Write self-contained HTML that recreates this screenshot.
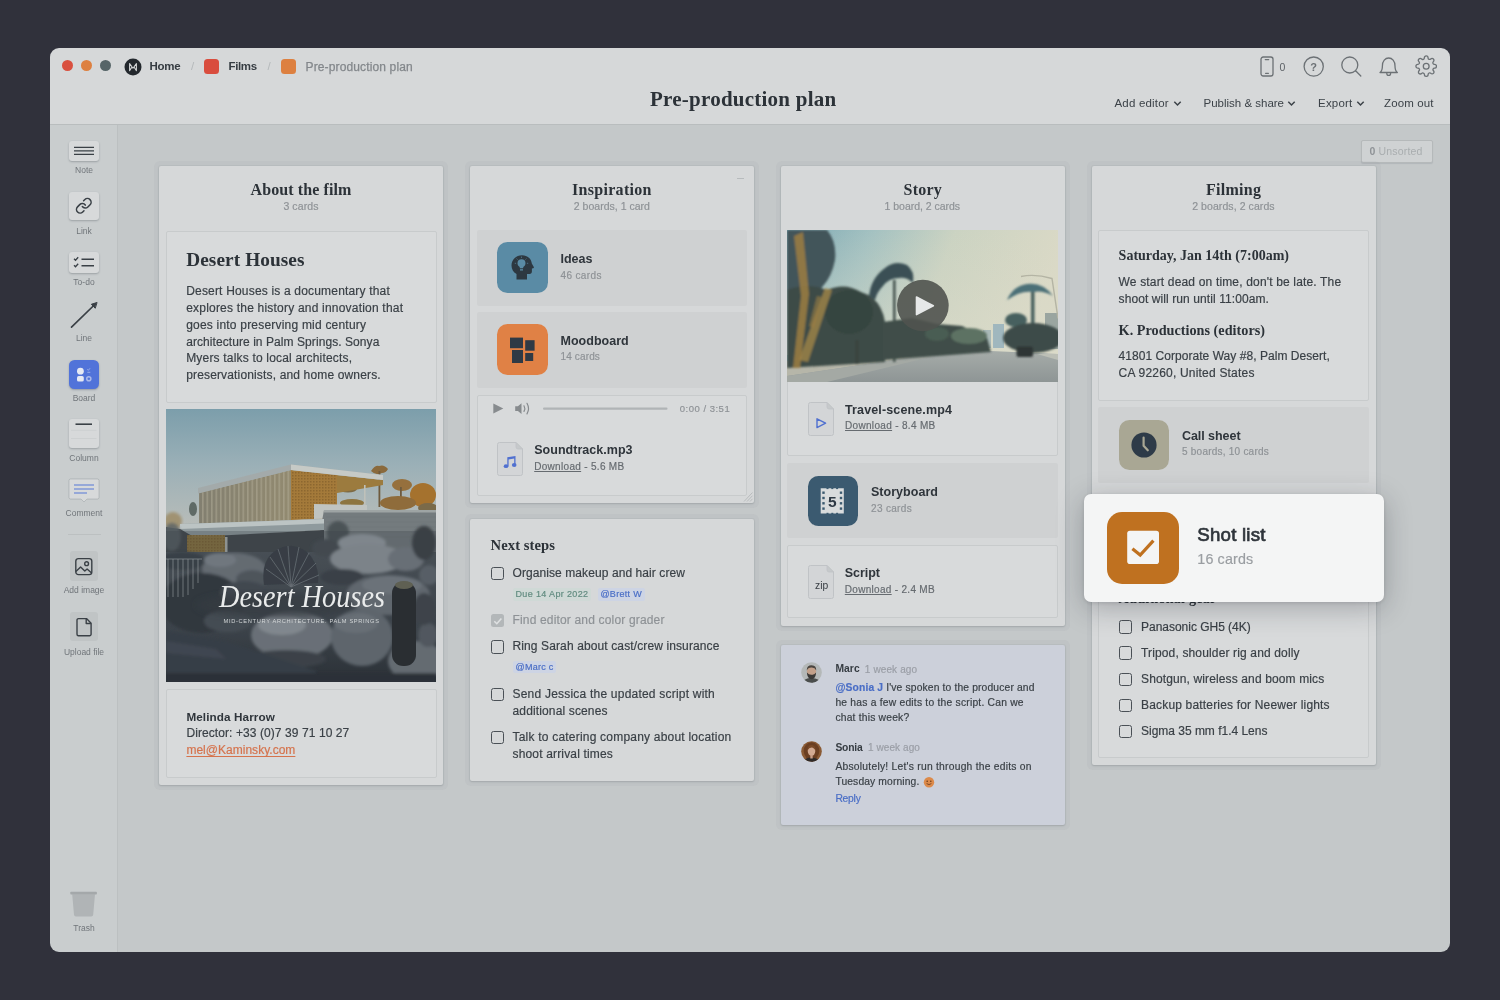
<!DOCTYPE html>
<html><head><meta charset="utf-8"><title>Pre-production plan</title>
<style>
*{box-sizing:border-box;margin:0;padding:0}
html,body{width:1500px;height:1000px;overflow:hidden}
body{background:#30313b;font-family:"Liberation Sans",sans-serif;color:#3a4046;position:relative;font-size:12px}
.a{position:absolute}
.t{position:absolute;white-space:nowrap;line-height:1}
.serif{font-family:"Liberation Serif",serif;font-weight:bold;color:#2c3238}
#win{will-change:transform;position:absolute;left:0;top:0;width:1500px;height:1000px;clip-path:inset(48px 50px 48px 50px round 9px);background:#c4c8c9}
#hdr{left:50px;top:48px;width:1400px;height:77px;background:#d6d8d9;border-bottom:1px solid #b9bdbe}
#side{left:50px;top:125px;width:68px;height:827px;background:#c9cdce;border-right:1px solid #bcc0c1}
.col{position:absolute;background:#d6d8d9;box-shadow:0 0 0 1px rgba(80,90,95,.05),0 0 0 5px rgba(80,85,90,.04),0 1px 2px rgba(60,70,80,.18);border-radius:2px}
.card{position:absolute;background:#d8dadb;border:1px solid #c8cbcc;border-radius:2px}
.bcard{position:absolute;background:#cfd1d2;border-radius:2px}
.r{-webkit-text-stroke:.18px}
.cs{font-size:10.5px;color:#8d9195}
.tool{position:absolute;font-size:8.5px;color:#70757a;text-align:center;white-space:nowrap;line-height:1}
.tbtn{position:absolute;background:#d7d9da;border-radius:3px;box-shadow:0 1px 2px rgba(50,60,70,.3)}
.cb{position:absolute;width:13.5px;height:13.5px;border:1.3px solid #4a5056;border-radius:2.5px}
</style></head><body>
<div id="win">
<!--HEADER-->
<div class="a" id="hdr"></div>
<div class="a" style="left:62px;top:60px;width:11px;height:11px;border-radius:50%;background:#d9503f"></div>
<div class="a" style="left:81px;top:60px;width:11px;height:11px;border-radius:50%;background:#dd8040"></div>
<div class="a" style="left:99.5px;top:60px;width:11px;height:11px;border-radius:50%;background:#566467"></div>
<svg class="a" style="left:124px;top:58px" width="18" height="18" viewBox="0 0 18 18"><circle cx="9" cy="9" r="8.5" fill="#23282d"/><path d="M5.600 12.600V5.600L9 10.200L12.400 5.600V12.600M5.600 12.600L8 9M12.400 12.600L10 9" fill="none" stroke="#d6d8d9" stroke-width="1.050" stroke-linejoin="round" stroke-linecap="round"/></svg>
<div class="t" id="h_home" style="letter-spacing:-0.238px;left:149.5px;top:61px;font-size:11.5px;font-weight:bold;color:#363c42">Home</div>
<div class="t" style="left:191px;top:61px;font-size:11.5px;color:#b4b8ba">/</div>
<div class="a" style="left:204px;top:59px;width:15px;height:15px;border-radius:3.5px;background:#d94d3e"></div>
<div class="t" id="h_films" style="letter-spacing:-0.349px;left:228.5px;top:61px;font-size:11.5px;font-weight:bold;color:#363c42">Films</div>
<div class="t" style="left:267.5px;top:61px;font-size:11.5px;color:#b4b8ba">/</div>
<div class="a" style="left:280.5px;top:59px;width:15px;height:15px;border-radius:3.5px;background:#dd8040"></div>
<div class="t" id="h_ppp" style="letter-spacing:0.135px;left:305.5px;top:60.5px;font-size:12px;color:#83878b;-webkit-text-stroke:0.25px #83878b">Pre-production plan</div>
<div class="t serif" id="h_title" style="letter-spacing:0.240px;left:650px;top:89px;font-size:21px">Pre-production plan</div>
<!-- right icons -->
<svg class="a" style="left:1259px;top:55px" width="16" height="23" viewBox="0 0 16 23" fill="none" stroke="#6c7175" stroke-width="1.3"><rect x="2" y="2" width="12" height="19" rx="2.2"/><path d="M6.3 4.6h3.4M6.6 18.3h2.8" stroke-linecap="round"/></svg>
<div class="t" style="left:1279.5px;top:62px;font-size:10.5px;color:#5d6267">0</div>
<svg class="a" style="left:1302px;top:55px" width="24" height="24" viewBox="0 0 24 24" fill="none" stroke="#6c7175" stroke-width="1.3"><circle cx="11.7" cy="11.6" r="9.6"/><text x="11.7" y="15.6" font-family="Liberation Sans, sans-serif" font-size="11" font-weight="bold" fill="#6c7175" stroke="none" text-anchor="middle">?</text></svg>
<svg class="a" style="left:1339px;top:54px" width="26" height="26" viewBox="0 0 26 26" fill="none" stroke="#6c7175" stroke-width="1.3" stroke-linecap="round"><circle cx="10.8" cy="11" r="8"/><path d="M16.6 16.8l5.2 5.2"/></svg>
<svg class="a" style="left:1377px;top:54px" width="24" height="26" viewBox="0 0 24 26" fill="none" stroke="#6c7175" stroke-width="1.3" stroke-linecap="round" stroke-linejoin="round"><path d="M3 18.5c2-1.2 2.4-3.2 2.4-6.5 0-4.800 2.800-8 6.300-8s6.300 3.200 6.300 8c0 3.300.4 5.300 2.400 6.500z"/><path d="M9.800 19.500a1.900 1.900 0 0 0 3.800 0"/></svg>
<svg class="a" style="left:1414.5px;top:55.3px" width="22.4" height="22.4" viewBox="0 0 24 24" fill="none" stroke="#6c7175" stroke-width="1.4" stroke-linejoin="round"><circle cx="12" cy="12" r="3.1"/><path d="M19.400 15a1.650 1.650 0 0 0 .330 1.820l.060.060a2 2 0 1 1-2.830 2.830l-.060-.060a1.650 1.650 0 0 0-1.820-.330 1.650 1.650 0 0 0-1 1.510V21a2 2 0 0 1-4 0v-.090A1.650 1.650 0 0 0 9 19.400a1.650 1.650 0 0 0-1.820.330l-.060.060a2 2 0 1 1-2.830-2.830l.060-.060a1.650 1.650 0 0 0 .330-1.820 1.650 1.650 0 0 0-1.510-1H3a2 2 0 0 1 0-4h.090A1.650 1.650 0 0 0 4.600 9a1.650 1.650 0 0 0-.330-1.820l-.060-.060a2 2 0 1 1 2.830-2.830l.060.060a1.650 1.650 0 0 0 1.820.330H9a1.650 1.650 0 0 0 1-1.510V3a2 2 0 0 1 4 0v.090a1.650 1.650 0 0 0 1 1.510 1.650 1.650 0 0 0 1.820-.330l.060-.060a2 2 0 1 1 2.830 2.830l-.060.060a1.650 1.650 0 0 0-.330 1.820V9a1.650 1.650 0 0 0 1.510 1H21a2 2 0 0 1 0 4h-.090a1.650 1.650 0 0 0-1.510 1z"/></svg>
<!-- menu -->
<div class="t" id="m1" style="letter-spacing:0.186px;left:1114.5px;top:97.5px;font-size:11.5px;color:#3c4248">Add editor</div>
<svg class="a" style="left:1173px;top:100px" width="9" height="7" viewBox="0 0 9 7" fill="none" stroke="#3c4248" stroke-width="1.5"><path d="M1.300 1.800L4.500 5l3.200-3.200"/></svg>
<div class="t" id="m2" style="letter-spacing:-0.003px;left:1203.500px;top:97.5px;font-size:11.5px;color:#3c4248">Publish &amp; share</div>
<svg class="a" style="left:1287px;top:100px" width="9" height="7" viewBox="0 0 9 7" fill="none" stroke="#3c4248" stroke-width="1.5"><path d="M1.300 1.800L4.500 5l3.200-3.200"/></svg>
<div class="t" id="m3" style="letter-spacing:0.208px;left:1318px;top:97.5px;font-size:11.5px;color:#3c4248">Export</div>
<svg class="a" style="left:1356px;top:100px" width="9" height="7" viewBox="0 0 9 7" fill="none" stroke="#3c4248" stroke-width="1.5"><path d="M1.300 1.800L4.500 5l3.200-3.200"/></svg>
<div class="t" id="m4" style="letter-spacing:0.140px;left:1384px;top:97.5px;font-size:11.5px;color:#3c4248">Zoom out</div>
<!-- unsorted -->
<div class="a" style="left:1361px;top:140px;width:72px;height:23px;border:1px solid #b5b9ba;border-radius:2px;background:#cfd2d3;box-shadow:0 1px 1px rgba(80,90,100,.15)"></div>
<div class="t" style="letter-spacing:0.163px;left:1369.5px;top:145.6px;font-size:10.5px;color:#a9adaf"><b style="color:#8f9397">0</b> Unsorted</div>
<!--SIDEBAR-->
<div class="a" id="side"></div>
<!-- Note -->
<div class="tbtn" style="left:69px;top:140.5px;width:30px;height:20px"></div>
<svg class="a" style="left:69px;top:140.5px" width="30" height="20" fill="none" stroke="#3a4046" stroke-width="1.2"><path d="M5 6.300h20M5 9.800h20M5 13.300h20"/></svg>
<div class="tool" id="s_note" style="left:54px;width:60px;top:166px">Note</div>
<!-- Link -->
<div class="tbtn" style="left:69px;top:192px;width:30px;height:28px"></div>
<svg class="a" style="left:74.7px;top:196.8px" width="17.6" height="17.6" viewBox="0 0 24 24" fill="none" stroke="#3a4046" stroke-width="2.1" stroke-linecap="round" stroke-linejoin="round"><path d="M10 13a5 5 0 0 0 7.540.540l3-3a5 5 0 0 0-7.070-7.070l-1.720 1.710"/><path d="M14 11a5 5 0 0 0-7.540-.540l-3 3a5 5 0 0 0 7.070 7.070l1.710-1.710"/></svg>
<div class="tool" id="s_link" style="left:54px;width:60px;top:226.500px">Link</div>
<!-- To-do -->
<div class="tbtn" style="left:69px;top:251.500px;width:30px;height:21px"></div>
<svg class="a" style="left:69px;top:251.500px" width="30" height="21" fill="none" stroke="#3a4046" stroke-width="1.300"><path d="M5 6.800l1.500 1.500 2.700-3M5 13.300l1.500 1.500 2.700-3"/><path d="M12.500 7.200h12.500M12.500 13.700h12.500" stroke-width="1.500"/></svg>
<div class="tool" id="s_todo" style="left:54px;width:60px;top:277.500px">To-do</div>
<!-- Line -->
<svg class="a" style="left:66px;top:298px" width="36" height="34" fill="none" stroke="#3a4046" stroke-width="1.700" stroke-linecap="round"><path d="M5.500 29.200L28.800 6.500"/><path d="M30.700 4.600l-5.400 1.700 3.700 3.700z" fill="#3a4046" stroke-width="1" stroke-linejoin="round"/></svg>
<div class="tool" id="s_line" style="left:54px;width:60px;top:334px">Line</div>
<!-- Board -->
<div class="a" style="left:69px;top:359.500px;width:29.500px;height:29.500px;border-radius:5.500px;background:#5173d9;box-shadow:0 1px 2px rgba(50,60,90,.35)"></div>
<svg class="a" style="left:69px;top:359.500px" width="30" height="30" fill="#e6e9f3"><circle cx="11.400" cy="11.200" r="3.400"/><rect x="8" y="16" width="6.800" height="5.600" rx="1.700"/><path d="M18.300 9.300l1 1 1.700-2M18.300 12.300h3" stroke="#aab9ea" stroke-width=".8" fill="none"/><circle cx="19.800" cy="18.800" r="2.800" fill="#aab9ea"/><circle cx="19.800" cy="18.800" r="1.300" fill="#5173d9"/></svg>
<div class="tool" id="s_board" style="left:54px;width:60px;top:393.500px">Board</div>
<!-- Column -->
<div class="tbtn" style="left:69px;top:419px;width:29.500px;height:29px"></div>
<svg class="a" style="left:69px;top:419px" width="30" height="29" fill="none"><path d="M6.500 5.200h16.500" stroke="#3a4046" stroke-width="1.600"/><path d="M2 11.300h25.500M2 19.500h25.500" stroke="#cdd0d1" stroke-width="1"/></svg>
<div class="tool" id="s_col" style="left:54px;width:60px;top:453.500px">Column</div>
<!-- Comment -->
<svg class="a" style="left:66px;top:476px" width="36" height="30"><path d="M4.500 3h27a1.500 1.500 0 0 1 1.500 1.500v17a1.500 1.500 0 0 1-1.500 1.500h-10.500l-3 3-3-3h-10.500a1.500 1.500 0 0 1-1.500-1.500v-17a1.500 1.500 0 0 1 1.500-1.500z" fill="#d7d9da" stroke="rgba(60,70,80,.18)" stroke-width="1"/><path d="M8 9h20M8 13h20M8 17h13" stroke="#5678d6" stroke-width="1.200" fill="none"/></svg>
<div class="tool" id="s_com" style="left:54px;width:60px;top:508.500px">Comment</div>
<div class="a" style="left:68px;top:533.500px;width:33px;height:1px;background:#bcc0c1"></div>
<!-- Add image -->
<div class="a" style="left:69.500px;top:551px;width:28.500px;height:29.500px;border-radius:3px;background:#c0c4c5"></div>
<svg class="a" style="left:73px;top:556px" width="22" height="22" fill="none" stroke="#3a4046" stroke-width="1.400" stroke-linejoin="round"><rect x="2.800" y="2.600" width="16" height="16" rx="2.600"/><circle cx="13.600" cy="7.700" r="1.900"/><path d="M2.900 15.600l4.700-4.600 4.200 4 2.300-2 4.500 4"/></svg>
<div class="tool" id="s_img" style="left:54px;width:60px;top:586px">Add image</div>
<!-- Upload file -->
<div class="a" style="left:69.500px;top:612px;width:28.500px;height:29px;border-radius:3px;background:#c0c4c5"></div>
<svg class="a" style="left:73px;top:616px" width="22" height="22" fill="none" stroke="#3a4046" stroke-width="1.400" stroke-linejoin="round"><path d="M5.500 2.600h8l4.600 4.600v11a1.500 1.500 0 0 1-1.500 1.500h-11.100a1.500 1.500 0 0 1-1.500-1.500v-14.100a1.500 1.500 0 0 1 1.500-1.500z"/><path d="M13.200 2.800v4.700h4.700"/></svg>
<div class="tool" id="s_up" style="left:54px;width:60px;top:647.500px">Upload file</div>
<!-- Trash -->
<svg class="a" style="left:68px;top:889px" width="32" height="32"><path d="M4.200 5.200h22.800l-1.800 20.500a2 2 0 0 1-2 1.800h-15.200a2 2 0 0 1-2-1.800z" fill="#b0b4b6"/><rect x="2.300" y="2.800" width="26.600" height="2.800" rx=".8" fill="#a4a8aa"/></svg>
<div class="tool" id="s_trash" style="left:54px;width:60px;top:924px">Trash</div>
<!--COL1-->
<div class="col" style="left:159px;top:166px;width:284px;height:619px;"></div>
<div class="t serif" style="left:250.6px;top:181.88px;font-size:16px;letter-spacing:0.088px;">About the film</div>
<div class="t r" style="left:283.4px;top:201.08px;font-size:10.5px;letter-spacing:0.109px;color:#8e9296;">3 cards</div>
<div class="card" style="left:166px;top:230.5px;width:270.5px;height:172px;"></div>
<div class="t serif" style="left:186.2px;top:249.70px;font-size:19.3px;letter-spacing:0.086px;">Desert Houses</div>
<div class="t r" style="left:186.2px;top:285.26px;font-size:12px;letter-spacing:0.182px;color:#3a4046;">Desert Houses is a documentary that</div>
<div class="t r" style="left:186.2px;top:302.06px;font-size:12px;letter-spacing:0.205px;color:#3a4046;">explores the history and innovation that</div>
<div class="t r" style="left:186.2px;top:318.86px;font-size:12px;letter-spacing:0.206px;color:#3a4046;">goes into preserving mid century</div>
<div class="t r" style="left:186.2px;top:335.66px;font-size:12px;letter-spacing:0.070px;color:#3a4046;">architecture in Palm Springs. Sonya</div>
<div class="t r" style="left:186.2px;top:352.46px;font-size:12px;letter-spacing:0.186px;color:#3a4046;">Myers talks to local architects,</div>
<div class="t r" style="left:186.2px;top:369.26px;font-size:12px;letter-spacing:0.152px;color:#3a4046;">preservationists, and home owners.</div>
<svg class="a" style="left:166px;top:409px" width="270" height="273" viewBox="0 0 270 273">
<defs>
<linearGradient id="sky" x1="0" y1="0" x2="0" y2="1"><stop offset="0" stop-color="#7c9eab"/><stop offset=".45" stop-color="#9bb0b7"/><stop offset="1" stop-color="#bcbeb9"/></linearGradient>
<linearGradient id="slat" x1="0" y1="0" x2="1" y2="0"><stop offset="0" stop-color="#827f70"/><stop offset="1" stop-color="#928a70"/></linearGradient>
<linearGradient id="gnd" x1="0" y1="0" x2="0" y2="1"><stop offset="0" stop-color="#4d545a"/><stop offset=".6" stop-color="#3d444b"/><stop offset="1" stop-color="#262b31"/></linearGradient>
<pattern id="sl" width="4.500" height="10" patternUnits="userSpaceOnUse"><rect x="0" width="1.600" height="10" fill="#bdb7a2" opacity=".42"/></pattern>
<pattern id="dots" width="3" height="3" patternUnits="userSpaceOnUse"><rect width="1.500" height="1.500" fill="#6e4f22" opacity=".45"/></pattern>
<filter id="b1"><feGaussianBlur stdDeviation="1.500"/></filter>
<filter id="b2"><feGaussianBlur stdDeviation=".700"/></filter>
<filter id="b3"><feGaussianBlur stdDeviation="3"/></filter>
<clipPath id="pc"><rect width="270" height="273"/></clipPath>
</defs>
<g clip-path="url(#pc)">
<rect width="270" height="125" fill="url(#sky)"/>
<!-- palms right -->
<g filter="url(#b2)">
<path d="M205 62q4-6 8-5q5-2 9 3q-2 4-6 4q-6 3-11-2z" fill="#8a6a3c"/><rect x="212.500" y="62" width="1.800" height="36" fill="#6e5a3e"/>
<ellipse cx="236" cy="76" rx="10" ry="6" fill="#96703c"/><rect x="234" y="78" width="1.800" height="22" fill="#6e5a3e"/>
<ellipse cx="257" cy="86" rx="13" ry="12" fill="#a5722f"/>
<ellipse cx="232" cy="94" rx="18" ry="7" fill="#8f6c3a"/><ellipse cx="186" cy="94" rx="12" ry="4" fill="#8d7440"/>
<ellipse cx="182" cy="80" rx="9" ry="3.500" fill="#7d6a45"/><ellipse cx="262" cy="99" rx="10" ry="5" fill="#7a6a4a"/>
</g>
<ellipse cx="27" cy="100" rx="4" ry="7" fill="#5f6a66" filter="url(#b2)"/>
<ellipse cx="7" cy="112" rx="9" ry="9" fill="#a09272" filter="url(#b1)"/>
<!-- upper volume -->
<polygon points="33,84 125,61 125,111 33,116" fill="url(#slat)"/>
<polygon points="33,84 125,61 125,111 33,116" fill="url(#sl)"/>
<polygon points="125,61 171,65 171,109 125,111" fill="#a47a3a"/>
<polygon points="125,61 171,65 171,109 125,111" fill="url(#dots)"/>
<polygon points="171,66 217,71 217,76 171,84" fill="#9c7b3e"/>
<rect x="198" y="76" width="1.600" height="24" fill="#bfc1ba"/>
<polygon points="32,79 125,55.500 217,66 217,71 125,61 32,84.500" fill="#a3aaaa"/>
<polygon points="125,55.500 217,66 217,71 125,61" fill="#c6cac6"/>
<polygon points="148,95 201,96 201,109 148,110" fill="#c0c4c1"/>
<!-- stone wall -->
<polygon points="158,101 270,101 270,146 150,146" fill="#747b7e"/>
<polygon points="158,101 270,101 270,103.500 158,103.500" fill="#9ea4a4"/>
<g stroke="#6a7173" stroke-width=".5" opacity=".7"><path d="M160 108h110M160 113h110M160 118h110M160 123h110M160 128h110"/></g>
<!-- lower slab -->
<polygon points="14,115 158,110 158,121 60,127 28,128 14,123" fill="#8f9a9d"/>
<polygon points="14,115 158,110 158,114.500 14,120" fill="#bcc4c4"/>
<!-- under slab -->
<polygon points="0,118 14,120 28,128 158,121 158,160 0,160" fill="#40464a"/>
<ellipse cx="6" cy="128" rx="9" ry="14" fill="#5a6266" opacity=".8" filter="url(#b1)"/>
<rect x="21" y="126" width="38" height="24" fill="#94783a" opacity=".9" filter="url(#b2)"/>
<rect x="21" y="126" width="38" height="24" fill="url(#dots)"/>
<rect x="59" y="128" width="2.500" height="22" fill="#aeb2ae"/>
<!-- ground -->
<rect y="143" width="270" height="130" fill="url(#gnd)"/>
<g filter="url(#b1)">
<ellipse cx="16" cy="152" rx="24" ry="9" fill="#394046"/>
<ellipse cx="68" cy="160" rx="32" ry="16" fill="#747b82"/>
<ellipse cx="54" cy="151" rx="16" ry="7" fill="#868d94"/>
<ellipse cx="86" cy="170" rx="16" ry="9" fill="#565d64"/>
<ellipse cx="172" cy="124" rx="11" ry="12" fill="#4b5256"/>
<ellipse cx="160" cy="139" rx="14" ry="9" fill="#464d52"/>
<ellipse cx="196" cy="134" rx="24" ry="9" fill="#9aa1a7"/>
<ellipse cx="202" cy="150" rx="38" ry="15" fill="#969da3"/>
<ellipse cx="240" cy="150" rx="18" ry="12" fill="#7a8188"/>
<ellipse cx="258" cy="134" rx="12" ry="17" fill="#3a4045"/>
<ellipse cx="263" cy="166" rx="10" ry="10" fill="#646b72"/>
<ellipse cx="176" cy="168" rx="22" ry="8" fill="#3a4047"/>
<ellipse cx="222" cy="186" rx="42" ry="20" fill="#6f767d"/>
<ellipse cx="226" cy="176" rx="30" ry="9" fill="#7f868d"/>
<ellipse cx="36" cy="194" rx="42" ry="30" fill="#2e343b"/>
<ellipse cx="78" cy="184" rx="24" ry="12" fill="#444b52"/>
<ellipse cx="62" cy="212" rx="24" ry="11" fill="#4a5158"/>
<ellipse cx="126" cy="226" rx="41" ry="24" fill="#7b8289"/>
<ellipse cx="116" cy="216" rx="24" ry="10" fill="#9ca3a9"/>
<ellipse cx="120" cy="250" rx="40" ry="9" fill="#3d434a"/>
<ellipse cx="196" cy="228" rx="31" ry="29" fill="#6c737a"/>
<ellipse cx="190" cy="214" rx="22" ry="10" fill="#7a8188"/>
<ellipse cx="250" cy="252" rx="28" ry="20" fill="#747b82"/>
<ellipse cx="262" cy="226" rx="10" ry="12" fill="#5a6168"/>
<ellipse cx="258" cy="200" rx="11" ry="16" fill="#3f454c"/>
<polygon points="0,222 60,232 150,262 150,273 0,273" fill="#363d47"/>
<polygon points="0,232 50,240 60,250 0,244" fill="#424955"/>
<rect y="264" width="270" height="12" fill="#272c33"/>
</g>
<ellipse cx="110" cy="196" rx="80" ry="13" fill="#343a41" opacity=".7" filter="url(#b3)"/>
<rect y="122" width="270" height="152" fill="#3b4148" opacity=".28"/>
<!-- agave fan -->
<g filter="url(#b2)"><path d="M98 176q-4-26 14-36q16-8 30 4q12 12 10 30z" fill="#373e45"/>
<g stroke="#737a80" stroke-width=".8" opacity=".8"><path d="M125 178L100 160M125 178L104 148M125 178L112 140M125 178L122 137M125 178L133 138M125 178L143 144M125 178L150 154M125 178L153 166"/></g></g>
<rect x="226" y="173" width="24" height="84" rx="11" fill="#2b2f33" filter="url(#b2)"/>
<ellipse cx="238" cy="176" rx="9" ry="4" fill="#5f6052" filter="url(#b2)"/>
<g stroke="#a6adb0" stroke-width=".7" opacity=".75"><path d="M2 150v38M7 150v38M12 150v38M17 150v38M22 150v36M27 150v30M32 150v24M0 150h36"/></g>
<text x="53" y="198" font-family="Liberation Serif, serif" font-style="italic" font-size="32" fill="#e9ebeb" textLength="166" lengthAdjust="spacingAndGlyphs">Desert Houses</text>
<text x="57.600" y="213.600" font-family="Liberation Sans, sans-serif" font-size="5.700" fill="#d3d7d8" textLength="155.400" lengthAdjust="spacing">MID-CENTURY ARCHITECTURE. PALM SPRINGS</text>
</g>
</svg>
<div class="card" style="left:166px;top:689px;width:270.5px;height:88.5px;"></div>
<div class="t" style="left:186.4px;top:710.51px;font-size:11.7px;letter-spacing:0.112px;color:#2f353b;font-weight:bold;">Melinda Harrow</div>
<div class="t r" style="left:186.4px;top:727.26px;font-size:12px;letter-spacing:0.085px;color:#3a4046;">Director: +33 (0)7 39 71 10 27</div>
<div class="t r" style="left:186.4px;top:744.26px;font-size:12px;letter-spacing:0.021px;color:#d5734d;text-decoration:underline;text-underline-offset:1.5px;">mel@Kaminsky.com</div>
<!--COL2-->
<div class="col" style="left:470px;top:166px;width:284px;height:337px;"></div>
<div class="t serif" style="left:572.0px;top:181.88px;font-size:16px;letter-spacing:0.303px;">Inspiration</div>
<div class="t r" style="left:573.8px;top:201.08px;font-size:10.5px;letter-spacing:0.019px;color:#8e9296;">2 boards, 1 card</div>
<div class="a" style="left:736.5px;top:178px;width:7px;height:1.2px;background:#b7bbbd"></div>
<div class="bcard" style="left:477px;top:230px;width:270px;height:75.5px;"></div>
<div class="a" style="left:497px;top:242px;width:50.5px;height:50.5px;border-radius:10.5px;background:#5a8ba5"></div>
<svg class="a" style="left:497px;top:242px" width="50" height="50" viewBox="0 0 50 50"><path d="M14.500 23.500c0-6 4.500-10.300 10.500-10.300c5.800 0 9.300 3.600 9.800 8.300l2 3.600c.3.600 0 1-.6 1.100l-1.300.200v3.200c0 1.500-.9 2.300-2.300 2.300h-2.600v5.600h-10.500v-5.400c-3.200-2-5-5-5-8.600z" fill="#2d3841"/><path d="M24.500 17.200a4 4 0 0 0-4 4c0 1.500.8 2.600 1.700 3.400c.5.500.7 1 .7 1.600h3.200c0-.6.200-1.100.7-1.600c.9-.8 1.700-1.900 1.700-3.400a4 4 0 0 0-4-4zM23 27.200h3v1.200h-3z" fill="#5a8ba5"/><g stroke="#5a8ba5" stroke-width=".7"><path d="M24.500 14.600v1.300M19.600 16.600l.9.900M29.400 16.600l-.9.900M17.800 21.300h1.300M31.200 21.300h-1.300"/></g></svg>
<div class="t" style="left:560.5px;top:253.16px;font-size:12.5px;letter-spacing:-0.034px;color:#2f353b;font-weight:bold;">Ideas</div>
<div class="t r" style="left:560.5px;top:270.88px;font-size:10px;letter-spacing:0.368px;color:#8e9296;">46 cards</div>
<div class="bcard" style="left:477px;top:311.5px;width:270px;height:76px;"></div>
<div class="a" style="left:497px;top:324px;width:50.5px;height:51px;border-radius:10.5px;background:#e08145"></div>
<svg class="a" style="left:497px;top:324px" width="50" height="51" viewBox="0 0 50 51" fill="#2f3a45"><rect x="13" y="13.600" width="13" height="10.600"/><rect x="28.200" y="16.200" width="9.400" height="10.500"/><rect x="15" y="26" width="11" height="13"/><rect x="28.200" y="29" width="8" height="8"/></svg>
<div class="t" style="left:560.5px;top:335.36px;font-size:12.5px;letter-spacing:0.017px;color:#2f353b;font-weight:bold;">Moodboard</div>
<div class="t r" style="left:560.5px;top:352.49px;font-size:10px;letter-spacing:0.143px;color:#8e9296;">14 cards</div>
<div class="card" style="left:477px;top:394.5px;width:270px;height:101px;"></div>
<svg class="a" style="left:490px;top:400px" width="190" height="18" viewBox="0 0 190 18"><path d="M3.300 3.600L13.300 8.500L3.300 13.400z" fill="#878b8e"/><path d="M25.200 6.300h2.700l3.600-3v10.600l-3.600-3h-2.700z" fill="#878b8e"/><path d="M34 5.800q1.600 2.800 0 5.600M37 3.300q3 5.300 0 10.600" fill="none" stroke="#878b8e" stroke-width="1.200" stroke-linecap="round"/><rect x="53" y="7.600" width="124.500" height="2.200" rx="1.100" fill="#b0b4b6"/></svg>
<svg class="a" style="left:496px;top:441px" width="30" height="36" viewBox="0 0 30 36"><path d="M3.500 1.500h16.500l6.500 6.500v24.500a2 2 0 0 1-2 2h-21a2 2 0 0 1-2-2v-29a2 2 0 0 1 2-2z" fill="#d3d5d7" stroke="#c0c3c6" stroke-width="1"/><path d="M20 1.500v4.500a2 2 0 0 0 2 2h4.500z" fill="#c6c9cb" stroke="#c0c3c6" stroke-width=".8"/><g fill="#5070d0"><ellipse cx="10" cy="25.200" rx="2.300" ry="1.900"/><ellipse cx="18.200" cy="24" rx="2.300" ry="1.900"/><path d="M11.300 16.300l8.200-1.400v9.100h-1.300v-6.400l-5.600 1v6.600h-1.300z"/></g></svg>
<svg class="a" style="left:742px;top:490px" width="12" height="13" viewBox="0 0 12 13" stroke="#b4b8ba" stroke-width=".9" fill="none"><path d="M2 11.500L10.500 2.500M5 11.500L10.500 5.700M8 11.500L10.500 8.800"/></svg>
<div class="t r" style="left:679.8px;top:403.79px;font-size:9.5px;letter-spacing:0.499px;color:#8e9296;">0:00 / 3:51</div>
<div class="t" style="left:534.2px;top:443.86px;font-size:12.5px;letter-spacing:0.033px;color:#2f353b;font-weight:bold;">Soundtrack.mp3</div>
<div class="t r" style="left:534.2px;top:461.69px;font-size:10px;letter-spacing:0.308px;color:#666b70;"><u>Download</u> - 5.6 MB</div>
<div class="col" style="left:470px;top:519px;width:284px;height:262px;"></div>
<div class="t serif" style="left:490.6px;top:538.08px;font-size:14.6px;letter-spacing:0.086px;">Next steps</div>
<div class="cb" style="left:490.6px;top:566.7px"></div>
<div class="t r" style="left:512.5px;top:566.76px;font-size:12px;letter-spacing:0.083px;color:#3a4046;">Organise makeup and hair crew</div>
<div class="a" style="left:513px;top:588px;width:77.5px;height:12.5px;background:#cfd9d6;border-radius:2px"></div>
<div class="t r" style="left:515.5px;top:590.00px;font-size:9px;letter-spacing:0.356px;color:#628c80;">Due 14 Apr 2022</div>
<div class="a" style="left:598px;top:588px;width:46.5px;height:12.5px;background:#cdd4e4;border-radius:2px"></div>
<div class="t r" style="left:600.4px;top:590.00px;font-size:9px;letter-spacing:0.307px;color:#4a6ec6;">@Brett W</div>
<div class="a" style="left:490.6px;top:613.7px;width:13.5px;height:13.5px;border-radius:2.5px;background:#b3b7b9"></div><svg class="a" style="left:490.6px;top:613.7px" width="14" height="14" fill="none" stroke="#dfe1e2" stroke-width="1.6"><path d="M3.3 7.2l2.5 2.5 4.6-5.2"/></svg>
<div class="t r" style="left:512.5px;top:614.26px;font-size:12px;letter-spacing:0.167px;color:#8e9296;">Find editor and color grader</div>
<div class="cb" style="left:490.6px;top:640px"></div>
<div class="t r" style="left:512.5px;top:640.26px;font-size:12px;letter-spacing:0.117px;color:#3a4046;">Ring Sarah about cast/crew insurance</div>
<div class="a" style="left:513px;top:660.5px;width:43px;height:12.5px;background:#cdd4e4;border-radius:2px"></div>
<div class="t r" style="left:515.5px;top:662.50px;font-size:9px;letter-spacing:0.280px;color:#4a6ec6;">@Marc c</div>
<div class="cb" style="left:490.6px;top:687.7px"></div>
<div class="t r" style="left:512.5px;top:688.26px;font-size:12px;letter-spacing:0.214px;color:#3a4046;">Send Jessica the updated script with</div>
<div class="t r" style="left:512.5px;top:705.06px;font-size:12px;letter-spacing:0.139px;color:#3a4046;">additional scenes</div>
<div class="cb" style="left:490.6px;top:730.8px"></div>
<div class="t r" style="left:512.5px;top:731.26px;font-size:12px;letter-spacing:0.210px;color:#3a4046;">Talk to catering company about location</div>
<div class="t r" style="left:512.5px;top:747.66px;font-size:12px;letter-spacing:0.164px;color:#3a4046;">shoot arrival times</div>
<!--COL3-->
<div class="col" style="left:781px;top:166px;width:283.5px;height:460px;"></div>
<div class="t serif" style="left:903.5px;top:181.88px;font-size:16px;letter-spacing:0.234px;">Story</div>
<div class="t r" style="left:884.6px;top:201.08px;font-size:10.5px;letter-spacing:-0.031px;color:#8e9296;">1 board, 2 cards</div>
<div class="card" style="left:787px;top:230px;width:271px;height:225.5px;"></div>
<svg class="a" style="left:787px;top:230px" width="271" height="152" viewBox="0 0 271 152">
<defs>
<linearGradient id="vsky" x1="0" y1="0" x2="1" y2=".2"><stop offset="0" stop-color="#7da9b4"/><stop offset=".3" stop-color="#a3c1c1"/><stop offset=".6" stop-color="#cbd3c2"/><stop offset="1" stop-color="#dad9c6"/></linearGradient>
<linearGradient id="vsky2" x1="0" y1="0" x2="0" y2="1"><stop offset="0" stop-color="#d8d8c6" stop-opacity="0"/><stop offset="1" stop-color="#dcdccb" stop-opacity=".55"/></linearGradient>
<linearGradient id="vroad" x1="0" y1="0" x2="0" y2="1"><stop offset="0" stop-color="#a6aca9"/><stop offset="1" stop-color="#8e9595"/></linearGradient>
<filter id="vb"><feGaussianBlur stdDeviation="1.100"/></filter>
<filter id="vb2"><feGaussianBlur stdDeviation=".500"/></filter>
<clipPath id="vc"><rect width="271" height="152"/></clipPath>
</defs>
<g clip-path="url(#vc)">
<rect width="271" height="152" fill="url(#vsky)"/>
<rect width="271" height="125" fill="url(#vsky2)"/>
<!-- road & sidewalks -->
<polygon points="0,134 150,124 204,121 271,124 271,152 0,152" fill="url(#vroad)"/>
<polygon points="0,131 154,123 0,146" fill="#b6b6a9"/>
<polygon points="0,146 154,123 160,123 40,152 0,152" fill="#a4a9a4"/>
<polygon points="250,124 271,124 271,130" fill="#bcbfb6"/>
<!-- buildings right -->
<rect x="206" y="94" width="11" height="24" fill="#a0b7be" filter="url(#vb2)"/>
<rect x="196" y="100" width="8" height="18" fill="#a9b9b8" filter="url(#vb2)"/>
<rect x="258" y="83" width="13" height="36" fill="#9aa5a0" filter="url(#vb2)"/>
<g filter="url(#vb)">
<!-- far left tall tree -->
<path d="M0 0h40q10 12 8 30q-3 16-12 26l-8 10h-28z" fill="#42545a"/>
<!-- mid-left mass -->
<path d="M0 60q20-8 40 0q18-8 34 2q20 6 24 30v40l-98 6z" fill="#3d4c47"/>
<ellipse cx="62" cy="82" rx="24" ry="22" fill="#36453f"/>
<path d="M7 6l7 60l-8 72h7l9-74l-6-62z" fill="#9c7e42" opacity=".85"/>
<path d="M12 130l26-72l7 2l-24 72z" fill="#a08446" opacity=".8"/>
<path d="M22 96l8-30l5 1l-8 31z" fill="#9c7e42" opacity=".6"/>
<!-- palm -->
<path d="M82 66q2-18 16-28q10-8 22-3q8 6 6 18q-6-6-14-5q-10 0-16 8q-6 6-8 14z" fill="#3b5054"/>
<rect x="106" y="50" width="2.600" height="82" fill="#46544f"/>
<rect x="68" y="110" width="4" height="24" fill="#3a4440"/>
<!-- tree line mid -->
<polygon points="96,92 125,88 150,94 175,96 200,108 204,122 96,130" fill="#3f4e48"/>
<ellipse cx="182" cy="106" rx="18" ry="8" fill="#5d7263"/>
<ellipse cx="150" cy="104" rx="12" ry="7" fill="#4a5d52"/>
<!-- right palms/trees -->
<path d="M220 70q6-14 20-16q16-2 26 12q-10-6-20-4q-12-2-26 8z" fill="#4b6f77"/>
<rect x="244" y="62" width="3.500" height="54" fill="#48605f"/>
<ellipse cx="229" cy="90" rx="11" ry="7" fill="#46605f"/>
<ellipse cx="246" cy="108" rx="30" ry="15" fill="#3c4b48"/>
<rect x="229.500" y="116.500" width="16.500" height="10.500" rx="2" fill="#2e3535"/>
</g>
<path d="M234 46.500q14-3 31 2l6 40" fill="none" stroke="#b4b4a4" stroke-width="1.400"/>
<circle cx="135.900" cy="75.500" r="25.800" fill="#50534f" opacity=".9"/>
<path d="M129.500 67L146.300 75.800L129.500 84.600z" fill="#e6e8e8" stroke="#e6e8e8" stroke-width="1.600" stroke-linejoin="round"/>
</g>
</svg>
<svg class="a" style="left:807px;top:401px" width="30" height="36" viewBox="0 0 30 36"><path d="M3.500 1.500h16.500l6.500 6.500v24.500a2 2 0 0 1-2 2h-21a2 2 0 0 1-2-2v-29a2 2 0 0 1 2-2z" fill="#d3d5d7" stroke="#c0c3c6" stroke-width="1"/><path d="M20 1.500v4.500a2 2 0 0 0 2 2h4.500z" fill="#c6c9cb" stroke="#c0c3c6" stroke-width=".8"/><path d="M10 17.800l8.600 4.400l-8.600 4.400z" fill="none" stroke="#5070d0" stroke-width="1.400" stroke-linejoin="round"/></svg>
<div class="t" style="left:845.0px;top:404.26px;font-size:12.5px;letter-spacing:0.130px;color:#2f353b;font-weight:bold;">Travel-scene.mp4</div>
<div class="t r" style="left:845.0px;top:420.88px;font-size:10px;letter-spacing:0.326px;color:#666b70;"><u>Download</u> - 8.4 MB</div>
<div class="bcard" style="left:787px;top:463px;width:270.5px;height:74.5px;"></div>
<div class="a" style="left:808px;top:476px;width:50px;height:50px;border-radius:10.5px;background:#3b5a70"></div>
<svg class="a" style="left:808px;top:476px" width="50" height="50" viewBox="0 0 50 50"><path d="M12.700 12.300h23.100v25.300h-23.100z" fill="#d9dcdd"/><g fill="#3b5a70"><rect x="14.300" y="15.500" width="2.400" height="2.400"/><rect x="14.300" y="20.800" width="2.400" height="2.400"/><rect x="14.300" y="26.100" width="2.400" height="2.400"/><rect x="14.300" y="31.400" width="2.400" height="2.400"/><rect x="31.800" y="15.500" width="2.400" height="2.400"/><rect x="31.800" y="20.800" width="2.400" height="2.400"/><rect x="31.800" y="26.100" width="2.400" height="2.400"/><rect x="31.800" y="31.400" width="2.400" height="2.400"/><rect x="18.500" y="11.300" width="2" height="1.800"/><rect x="23.300" y="11.300" width="2" height="1.800"/><rect x="28.100" y="11.300" width="2" height="1.800"/><rect x="18.500" y="36.800" width="2" height="1.800"/><rect x="23.300" y="36.800" width="2" height="1.800"/><rect x="28.100" y="36.800" width="2" height="1.800"/></g><text x="24.300" y="30.600" text-anchor="middle" font-family="Liberation Sans, sans-serif" font-weight="bold" font-size="15.500" fill="#2f3a45">5</text></svg>
<div class="t" style="left:871.0px;top:485.86px;font-size:12.5px;letter-spacing:0.031px;color:#2f353b;font-weight:bold;">Storyboard</div>
<div class="t r" style="left:871.0px;top:503.88px;font-size:10px;letter-spacing:0.330px;color:#8e9296;">23 cards</div>
<div class="card" style="left:787px;top:545px;width:270.5px;height:73px;"></div>
<svg class="a" style="left:807px;top:564px" width="30" height="36" viewBox="0 0 30 36"><path d="M3.500 1.500h16.500l6.500 6.500v24.500a2 2 0 0 1-2 2h-21a2 2 0 0 1-2-2v-29a2 2 0 0 1 2-2z" fill="#d3d5d7" stroke="#c0c3c6" stroke-width="1"/><path d="M20 1.500v4.500a2 2 0 0 0 2 2h4.500z" fill="#c6c9cb" stroke="#c0c3c6" stroke-width=".8"/><text x="14.600" y="24.600" text-anchor="middle" font-family="Liberation Sans, sans-serif" font-size="10.300" fill="#3a4046">zip</text></svg>
<div class="t" style="left:844.8px;top:566.66px;font-size:12.5px;letter-spacing:-0.040px;color:#2f353b;font-weight:bold;">Script</div>
<div class="t r" style="left:844.8px;top:584.68px;font-size:10px;letter-spacing:0.302px;color:#666b70;"><u>Download</u> - 2.4 MB</div>
<div class="col" style="left:781px;top:645px;width:283.5px;height:180px;background:#ccd0da;"></div>
<svg class="a" style="left:801px;top:661.500px" width="21" height="21" viewBox="0 0 21 21"><defs><clipPath id="av1"><circle cx="10.500" cy="10.500" r="10.300"/></clipPath></defs><g clip-path="url(#av1)"><rect width="21" height="21" fill="#b4b8b8"/><ellipse cx="10.500" cy="21" rx="9" ry="5" fill="#4a4d4c"/><ellipse cx="10.500" cy="9.500" rx="4.600" ry="5.600" fill="#c2a08a"/><path d="M5.900 10.500q.3 6.500 4.600 6.800q4.300-.3 4.600-6.800q-1.800 2.400-4.600 2.300q-2.800.1-4.600-2.300z" fill="#3b3a38"/><path d="M5.800 8.500q-.2-5.300 4.700-5.300q4.900 0 4.700 5.300q-1.200-3-4.700-2.900q-3.500-.1-4.700 2.900z" fill="#4a4540"/></g></svg>
<svg class="a" style="left:801px;top:740.800px" width="21" height="21" viewBox="0 0 21 21"><defs><clipPath id="av2"><circle cx="10.500" cy="10.500" r="10.300"/></clipPath></defs><g clip-path="url(#av2)"><rect width="21" height="21" fill="#8a5a34"/><ellipse cx="10.500" cy="10" rx="7.800" ry="8.800" fill="#6b3f22"/><ellipse cx="10.500" cy="21" rx="8" ry="4.600" fill="#2f2a28"/><ellipse cx="10.500" cy="10" rx="3.800" ry="4.800" fill="#d2aa92"/><path d="M6.500 9.500q0-5.500 4-5.500q4 0 4 5.500q-1.500-3-4-3q-2.500 0-4 3z" fill="#7a4a28"/><rect x="9.300" y="14" width="2.400" height="3.500" fill="#c9a089"/></g></svg>
<div class="t" style="left:835.4px;top:664.44px;font-size:10.3px;letter-spacing:0.088px;color:#363c42;font-weight:bold;">Marc</div>
<div class="t r" style="left:864.8px;top:664.68px;font-size:10px;letter-spacing:0.124px;color:#9a9ea6;">1 week ago</div>
<div class="t r" style="left:835.4px;top:683.24px;font-size:10.3px;letter-spacing:0.143px;color:#3a4046;"><span style="color:#4a6ec6;font-weight:bold">@Sonia J</span> I've spoken to the producer and</div>
<div class="t r" style="left:835.4px;top:698.24px;font-size:10.3px;letter-spacing:0.217px;color:#3a4046;">he has a few edits to the script. Can we</div>
<div class="t r" style="left:835.4px;top:713.24px;font-size:10.3px;letter-spacing:0.201px;color:#3a4046;">chat this week?</div>
<div class="t" style="left:835.4px;top:742.84px;font-size:10.3px;letter-spacing:-0.169px;color:#363c42;font-weight:bold;">Sonia</div>
<div class="t r" style="left:868.0px;top:743.09px;font-size:10px;letter-spacing:0.084px;color:#9a9ea6;">1 week ago</div>
<div class="t r" style="left:835.4px;top:761.64px;font-size:10.3px;letter-spacing:0.241px;color:#3a4046;">Absolutely! Let's run through the edits on</div>
<div class="t r" style="left:835.4px;top:776.84px;font-size:10.3px;letter-spacing:0.122px;color:#3a4046;">Tuesday morning.</div>
<svg class="a" style="left:922.5px;top:775.5px" width="12" height="12"><circle cx="6" cy="6.3" r="5.2" fill="#dc8a4a"/><circle cx="4.2" cy="5.2" r=".8" fill="#6a3a1a"/><circle cx="7.8" cy="5.2" r=".8" fill="#6a3a1a"/><path d="M3.6 7.6q2.4 2 4.800 0" stroke="#6a3a1a" stroke-width=".8" fill="none"/></svg>
<div class="t r" style="left:835.4px;top:793.64px;font-size:10.3px;letter-spacing:-0.226px;color:#4a6ec6;">Reply</div>
<!--COL4-->
<div class="col" style="left:1092px;top:166px;width:283.5px;height:599px;"></div>
<div class="t serif" style="left:1205.9px;top:181.88px;font-size:16px;letter-spacing:0.279px;">Filming</div>
<div class="t r" style="left:1192.2px;top:201.08px;font-size:10.5px;letter-spacing:0.080px;color:#8e9296;">2 boards, 2 cards</div>
<div class="card" style="left:1098px;top:229.5px;width:271px;height:171.5px;"></div>
<div class="t serif" style="left:1118.6px;top:248.84px;font-size:14px;letter-spacing:0.002px;">Saturday, Jan 14th (7:00am)</div>
<div class="t r" style="left:1118.6px;top:275.96px;font-size:12px;letter-spacing:0.164px;color:#3a4046;">We start dead on time, don't be late. The</div>
<div class="t r" style="left:1118.6px;top:292.66px;font-size:12px;letter-spacing:0.088px;color:#3a4046;">shoot will run until 11:00am.</div>
<div class="t serif" style="left:1118.6px;top:323.19px;font-size:14.2px;letter-spacing:0.019px;">K. Productions (editors)</div>
<div class="t r" style="left:1118.6px;top:349.56px;font-size:12px;letter-spacing:0.043px;color:#3a4046;">41801 Corporate Way #8, Palm Desert,</div>
<div class="t r" style="left:1118.6px;top:366.86px;font-size:12px;letter-spacing:0.199px;color:#3a4046;">CA 92260, United States</div>
<div class="bcard" style="left:1098px;top:407px;width:271px;height:75.5px;"></div>
<div class="a" style="left:1118.500px;top:420px;width:50px;height:50px;border-radius:10.500px;background:#a9a794"></div>
<svg class="a" style="left:1118.500px;top:420px" width="50" height="50" viewBox="0 0 50 50"><circle cx="25" cy="25" r="12.600" fill="#2e3b48"/><path d="M24.600 17.500v8.200l4.200 4.600" fill="none" stroke="#a9a794" stroke-width="2.200" stroke-linecap="round" stroke-linejoin="round"/></svg>
<div class="t" style="left:1182.0px;top:429.66px;font-size:12.5px;letter-spacing:-0.056px;color:#2f353b;font-weight:bold;">Call sheet</div>
<div class="t r" style="left:1182.0px;top:447.49px;font-size:10px;letter-spacing:0.232px;color:#8e9296;">5 boards, 10 cards</div>
<div class="card" style="left:1098px;top:496px;width:271px;height:261.5px;"></div>
<div class="t serif" style="left:1118.6px;top:590.89px;font-size:14.2px;letter-spacing:0.201px;">Additional gear</div>
<div class="cb" style="left:1118.6px;top:620.3px"></div>
<div class="t r" style="left:1141.0px;top:620.76px;font-size:12px;letter-spacing:-0.020px;color:#3a4046;">Panasonic GH5 (4K)</div>
<div class="cb" style="left:1118.6px;top:646.4499999999999px"></div>
<div class="t r" style="left:1141.0px;top:646.91px;font-size:12px;letter-spacing:0.146px;color:#3a4046;">Tripod, shoulder rig and dolly</div>
<div class="cb" style="left:1118.6px;top:672.5999999999999px"></div>
<div class="t r" style="left:1141.0px;top:673.06px;font-size:12px;letter-spacing:0.125px;color:#3a4046;">Shotgun, wireless and boom mics</div>
<div class="cb" style="left:1118.6px;top:698.75px"></div>
<div class="t r" style="left:1141.0px;top:699.21px;font-size:12px;letter-spacing:0.177px;color:#3a4046;">Backup batteries for Neewer lights</div>
<div class="cb" style="left:1118.6px;top:724.9px"></div>
<div class="t r" style="left:1141.0px;top:725.36px;font-size:12px;letter-spacing:-0.016px;color:#3a4046;">Sigma 35 mm f1.4 Lens</div>
</div>
<!--POPUP-->
<div class="a" style="left:1084px;top:493.5px;width:300px;height:108.5px;background:#f4f5f5;border-radius:7px;box-shadow:0 6px 28px rgba(20,25,35,.28),0 1px 4px rgba(20,25,35,.12)"></div>
<div class="a" style="left:1106.700px;top:512px;width:72px;height:72px;border-radius:15px;background:#bf7120"></div>
<svg class="a" style="left:1106.700px;top:512px" width="72" height="72" viewBox="0 0 72 72"><rect x="20.200" y="18.800" width="31.800" height="33.200" rx="2.800" fill="#f4f5f5"/><path d="M25.400 36.800l7.800 6.200l13.200-14.400" fill="none" stroke="#bf7120" stroke-width="3.200"/></svg>
<div class="t" style="left:1197.3px;top:526.22px;font-size:18.7px;letter-spacing:0.202px;color:#2f353b;-webkit-text-stroke:0.7px #2f353b;">Shot list</div>
<div class="t r" style="left:1197.3px;top:552.40px;font-size:14.3px;letter-spacing:0.145px;color:#9a9ea2;">16 cards</div>
</body></html>
